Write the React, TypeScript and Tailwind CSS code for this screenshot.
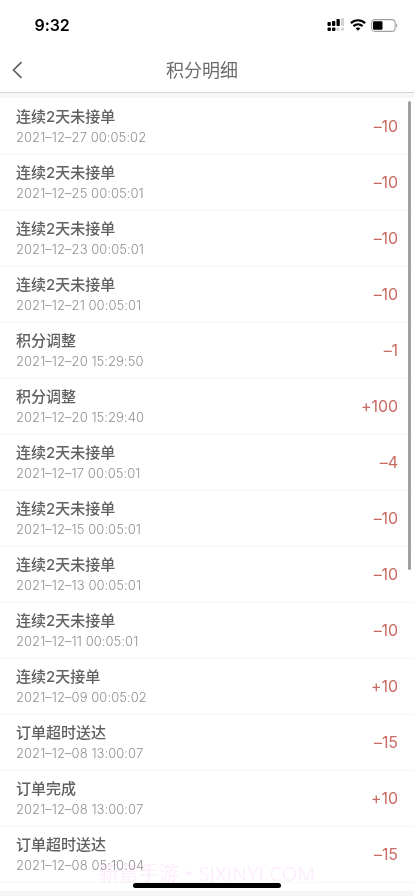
const records = [
  { title: "连续2天未接单", time: "2021–12–27 00:05:02", points: "–10" },
  { title: "连续2天未接单", time: "2021–12–25 00:05:01", points: "–10" },
  { title: "连续2天未接单", time: "2021–12–23 00:05:01", points: "–10" },
  { title: "连续2天未接单", time: "2021–12–21 00:05:01", points: "–10" },
  { title: "积分调整", time: "2021–12–20 15:29:50", points: "–1" },
  { title: "积分调整", time: "2021–12–20 15:29:40", points: "+100" },
  { title: "连续2天未接单", time: "2021–12–17 00:05:01", points: "–4" },
  { title: "连续2天未接单", time: "2021–12–15 00:05:01", points: "–10" },
  { title: "连续2天未接单", time: "2021–12–13 00:05:01", points: "–10" },
  { title: "连续2天未接单", time: "2021–12–11 00:05:01", points: "–10" },
  { title: "连续2天接单", time: "2021–12–09 00:05:02", points: "+10" },
  { title: "订单超时送达", time: "2021–12–08 13:00:07", points: "–15" },
  { title: "订单完成", time: "2021–12–08 13:00:07", points: "+10" },
  { title: "订单超时送达", time: "2021–12–08 05:10:04", points: "–15" },
];

const SignalIcon = () => (
  <svg width="18" height="14" viewBox="0 0 18 14">
    <g fill="#000">
      <rect x="0.5" y="4" width="3.3" height="4" rx="0.8" />
      <rect x="5" y="3" width="3.3" height="5" rx="0.8" />
      <rect x="9.5" y="1" width="3.3" height="7" rx="0.8" />
      <rect x="0.5" y="9.5" width="3.4" height="3.4" rx="1" />
      <rect x="5" y="9.5" width="3.4" height="3.4" rx="1" />
    </g>
    <g fill="#d2d2d2">
      <rect x="14" y="0" width="3" height="8" rx="0.8" />
      <rect x="9.5" y="9.5" width="3" height="3.2" rx="1" />
      <rect x="14" y="9.5" width="3" height="3.2" rx="1" />
    </g>
  </svg>
);

const WifiIcon = () => (
  <svg width="16" height="12" viewBox="0 0 16 12" fill="none" stroke="#000" strokeWidth="2.2">
    <path d="M0.9 4.1C4.8 0.3 11.2 0.3 15.1 4.1" />
    <path d="M3.5 7.1C6.1 4.7 9.9 4.7 12.5 7.1" />
    <path d="M5.6 9.3C7 8.1 9 8.1 10.4 9.3L8 11.8Z" fill="#000" stroke="none" />
  </svg>
);

const BatteryIcon = () => (
  <svg width="27" height="13" viewBox="0 0 27 13">
    <rect x="0.6" y="0.6" width="23.5" height="11.8" rx="3.4" fill="none" stroke="#a0a0a0" strokeWidth="1.1" />
    <rect x="2" y="2.2" width="9.5" height="8.6" rx="1.2" fill="#000" />
    <path d="M25.2 4.5C26.7 5 26.7 8 25.2 8.5Z" fill="#999" />
  </svg>
);

const StatusBar = () => (
  <div className="flex h-12 items-center pt-0.5 pr-4 pl-[34.5px]">
    <span className="flex-1 text-[16px] leading-5 font-semibold tracking-[-0.1px] text-black">9:32</span>
    <div className="flex items-center gap-[5px]">
      <SignalIcon />
      <WifiIcon />
      <BatteryIcon />
    </div>
  </div>
);

const Header = () => (
  <header className="grid h-[45px] grid-cols-[70px_1fr_80px] items-center border-b border-[#d4d4d4]">
    <button className="pl-3" aria-label="返回">
      <svg width="11" height="18" viewBox="0 0 11 18" fill="none" stroke="#606060" strokeWidth="1.7">
        <path d="M9.5 1.2L1.5 9L9.5 16.8" />
      </svg>
    </button>
    <h1 className="pt-0.5 text-center text-[18px] leading-6 text-[#6c6c6c]">积分明细</h1>
  </header>
);

export default function App() {
  return (
    <div className="relative flex h-[896px] w-[414px] flex-col overflow-hidden bg-white font-['Inter','Noto_Sans_CJK_SC',sans-serif]">
      <StatusBar />
      <Header />
      <div className="h-[5px] shrink-0 bg-[#f6f6f6]" />
      <ul className="pt-px">
        {records.map((record) => (
          <li
            key={record.time + record.title}
            className="flex h-14 items-center justify-between border-b border-[#f6f6f6] px-4"
          >
            <div className="pb-px">
              <p className="text-[15px] leading-[22px] font-medium text-[#606060]">{record.title}</p>
              <p className="text-[13px] leading-[19px] font-light tracking-[0.05px] text-[#909090]">{record.time}</p>
            </div>
            <span className="pb-0.5 text-[16px] leading-6 tracking-[-0.1px] text-[#c96a64]">{record.points}</span>
          </li>
        ))}
      </ul>
      <div className="h-2 shrink-0" />
      <div className="flex-1 bg-[#f6f6f6]" />

      <div className="absolute top-[101px] right-[3px] h-[469px] w-[3px] rounded-full bg-[#a0a0a0]" />
      <p className="absolute top-[860px] left-0 w-full text-center font-['Open_Sans','Noto_Sans_CJK_SC',sans-serif] text-[20px] leading-7 whitespace-nowrap text-[#fdeefd] mix-blend-multiply">
        新意手游・SJXINYI.COM
      </p>
      <div className="absolute top-[883px] left-[133px] h-[5px] w-[148px] rounded-full bg-black" />
    </div>
  );
}
